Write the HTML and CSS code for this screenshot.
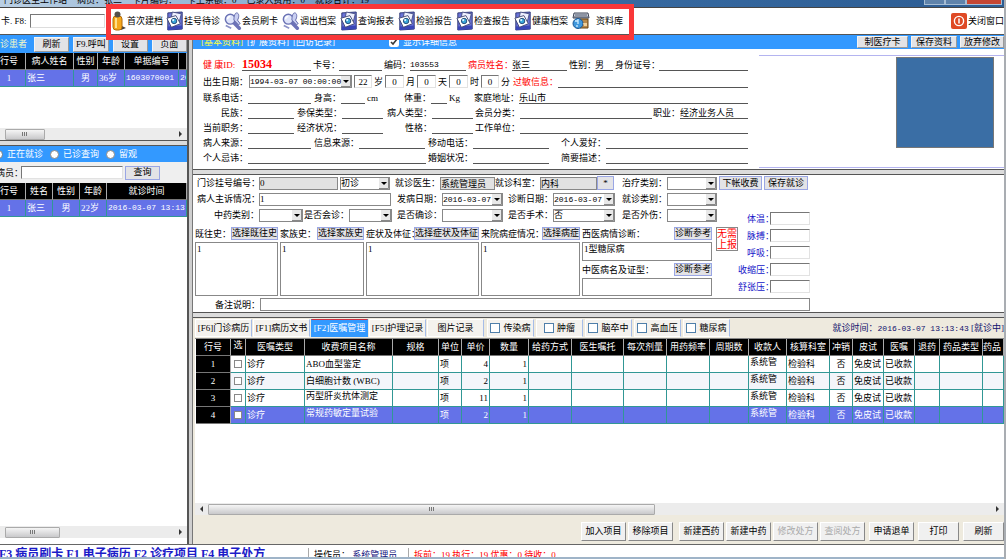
FILE: index.html
```html
<!DOCTYPE html>
<html lang="zh-CN">
<head>
<meta charset="utf-8">
<title>门诊医生工作站</title>
<link rel="stylesheet" href="styles.css">
</head>
<body>
<svg class="sprite" aria-hidden="true">
  <symbol id="i-doc" viewBox="0 0 20 22">
    <path d="M2 2 18 1 18 20 2 21Z" fill="#6b74d8" stroke="#26306f"/>
    <path d="M2 17 18 16 18 20 2 21Z" fill="#3a46b8"/>
    <path d="M7 1 17 3 14 15 5 12Z" fill="#eef0ff" stroke="#444c80"/>
    <path d="M1 8 11 5 16 14 6 18Z" fill="#fff" stroke="#3d4470"/>
    <circle cx="9" cy="11" r="3" fill="#3aa5d8" stroke="#1d4370"/>
    <circle cx="8" cy="10" r="1.2" fill="#dff6ff"/>
  </symbol>
  <symbol id="i-search" viewBox="0 0 20 20">
    <path d="M11 12 17 18" stroke="#6c72b8" stroke-width="4" stroke-linecap="round"/>
    <circle cx="7" cy="8" r="5.5" fill="#dfe4fa" stroke="#6a72b4" stroke-width="1.6"/>
    <path d="M4 8a3 3 0 0 1 3-3" stroke="#fff" stroke-width="1.5" fill="none"/>
    <path d="M14 1c3 0 3 5 1 8l3 4-2 1-5-5c0-4 1-8 3-8Z" fill="#c9cff2" stroke="#5a62a6"/>
    <path d="M2 15 8 18" stroke="#8b91c8" stroke-width="2"/>
  </symbol>
  <symbol id="i-person" viewBox="0 0 15 20">
    <path d="M8 14 14 17 9 19Z" fill="#444"/>
    <rect x="1" y="5" width="9" height="14" rx="3" fill="#f5a81c" stroke="#b36b08"/>
    <rect x="3" y="7" width="2" height="10" fill="#ffe08a"/>
    <circle cx="5.5" cy="3.5" r="3" fill="#55504a"/>
  </symbol>
  <symbol id="i-store" viewBox="0 0 18 18">
    <path d="M2 1h14l1 5H1Z" fill="#cfd3dc" stroke="#3c4456"/>
    <path d="M3 3h12M2 5h14" stroke="#4c566d"/>
    <path d="M8 7h8v9H8Z" fill="#b98a4c" stroke="#684515"/>
    <circle cx="6" cy="11.5" r="5" fill="#3f97dc" stroke="#1c5692"/>
    <path d="M3 9h3v3M6 7v2M5 15v-2" stroke="#cdebff" stroke-width="1.3" fill="none"/>
    <path d="M11 11h4v3h-3Z" fill="#f0cf9a"/>
  </symbol>
  <symbol id="i-power" viewBox="0 0 16 16">
    <rect width="16" height="16" rx="2" fill="#df4a25"/>
    <circle cx="8" cy="8" r="4.6" fill="none" stroke="#fff" stroke-width="1.4"/>
    <path d="M8 5.5v5" stroke="#fff" stroke-width="1.5"/>
  </symbol>
</svg>

<header class="titlebar">
  <div class="titlebar-text"><span>门诊医生工作站</span><span>病员：张三</span><span>卡片编码：</span><span>卡上余额：0</span><span>已录入费用：0</span><span>就诊合计：19</span></div>
  <div class="window-buttons"><button aria-label="最小化"></button><button aria-label="最大化"></button><button class="window-close" aria-label="关闭"></button></div>
</header>

<nav class="toolbar">
  <label class="card-label" for="card">卡. F8:</label>
  <input id="card" class="card-input">
  <div class="tools">
    <button class="tool"><svg class="tool-icon tool-icon-narrow"><use href="#i-person"/></svg>首次建档</button>
    <button class="tool"><svg class="tool-icon"><use href="#i-doc"/></svg>挂号待诊</button>
    <button class="tool"><svg class="tool-icon"><use href="#i-search"/></svg>会员刷卡</button>
    <button class="tool"><svg class="tool-icon"><use href="#i-search"/></svg>调出档案</button>
    <button class="tool"><svg class="tool-icon"><use href="#i-doc"/></svg>查询报表</button>
    <button class="tool"><svg class="tool-icon"><use href="#i-doc"/></svg>检验报告</button>
    <button class="tool"><svg class="tool-icon"><use href="#i-doc"/></svg>检查报告</button>
    <button class="tool"><svg class="tool-icon"><use href="#i-doc"/></svg>健康档案</button>
    <button class="tool tool-wide"><svg class="tool-icon"><use href="#i-store"/></svg>资料库</button>
    <div class="tools-frame"></div>
  </div>
  <button class="tool tool-exit"><svg class="exit-icon"><use href="#i-power"/></svg>关闭窗口</button>
</nav>

<div class="workspace">
  <aside class="sidebar">
    <section class="queue">
      <div class="queue-bar"><span class="queue-title">诊患者</span><button class="btn">刷新</button><button class="btn">F9.呼叫</button><button class="btn">设置</button><button class="btn">页面</button></div>
      <table class="grid list">
        <colgroup><col class="c-no"><col class="c-name"><col class="c-sex"><col class="c-age"><col class="c-bill"><col></colgroup>
        <thead><tr><th class="cut">行号</th><th>病人姓名</th><th>性别</th><th>年龄</th><th>单据编号</th><th></th></tr></thead>
        <tbody><tr class="selected"><td class="mid cut">1</td><td>张三</td><td class="mid">男</td><td>36岁</td><td class="mono">1603070001</td><td class="mono">20</td></tr></tbody>
      </table>
      <div class="fill"></div>
      <div class="scroll scroll-left"><span class="thumb thumb-small"></span><span class="arrow-right"></span></div>
    </section>
    <div class="splitter-h"></div>
    <section class="visits">
      <div class="radio-bar">
        <label><input type="radio" name="state" checked>正在就诊</label>
        <label><input type="radio" name="state">已诊查询</label>
        <label><input type="radio" name="state">留观</label>
      </div>
      <div class="search-bar"><label for="q">病员：</label><input id="q" class="sunken"><button class="btn btn-blue">查询</button></div>
      <table class="grid list">
        <colgroup><col class="c-no"><col class="c-age"><col class="c-age"><col class="c-age"><col></colgroup>
        <thead><tr><th class="cut">行号</th><th>姓名</th><th>性别</th><th>年龄</th><th>就诊时间</th></tr></thead>
        <tbody><tr class="selected"><td class="mid cut">1</td><td>张三</td><td class="mid">男</td><td>22岁</td><td class="mono">2016-03-07 13:13:43</td></tr></tbody>
      </table>
      <div class="fill"></div>
      <div class="scroll scroll-left"><span class="thumb thumb-medium"></span><span class="arrow-right"></span></div>
      <div class="sidebar-foot"></div>
    </section>
  </aside>
  <div class="splitter-v"></div>

  <main class="main">
    <div class="profile-bar">
      <a href="#" class="active">[基本资料]</a><a href="#">[扩展资料]</a><a href="#">[回访记录]</a>
      <label class="detail-check"><input type="checkbox" checked>显示详细信息</label>
      <div class="profile-actions"><button class="btn btn-mid">制医疗卡</button><button class="btn">保存资料</button><button class="btn btn-cut">放弃修改</button></div>
    </div>

    <section class="profile">
      <div class="profile-fields">
        <div class="row row-id">
          <label class="red" for="f1">健 康ID:</label><input id="f1" class="line id-value" value="15034">
          <label for="f2">卡号：</label><input id="f2" class="line">
          <label for="f3">编码：</label><input id="f3" class="line mono" value="103553">
          <label class="red" for="f4">病员姓名：</label><input id="f4" class="line" value="张三">
          <label for="f5">性别：</label><input id="f5" class="line" value="男">
          <label for="f6">身份证号：</label><input id="f6" class="line">
        </div>
        <div class="row row-birth">
          <label for="f7">出生日期：</label><select id="f7" class="select mono"><option>1994-03-07 00:00:00</option></select>
          <input id="a1" class="sunken num" value="22"><label for="a1">岁</label>
          <input id="a2" class="sunken num" value="0"><label for="a2">月</label>
          <input id="a3" class="sunken num" value="0"><label for="a3">天</label>
          <input id="a4" class="sunken num" value="0"><label for="a4">时</label>
          <input id="a5" class="sunken num" value="0"><label for="a5">分</label>
          <label class="red" for="f8">过敏信息：</label><input id="f8" class="line">
        </div>
        <div class="row row-contact">
          <label for="g1">联系电话：</label><input id="g1" class="line">
          <label for="g2">身高：</label><input id="g2" class="line"><span class="unit">cm</span>
          <label for="g3">体重：</label><input id="g3" class="line"><span class="unit">Kg</span>
          <label for="g4">家庭地址：</label><input id="g4" class="line" value="乐山市">
        </div>
        <div class="row row-type">
          <label for="h1">民族：</label><input id="h1" class="line">
          <label for="h2">参保类型：</label><input id="h2" class="line">
          <label for="h3">病人类型：</label><input id="h3" class="line">
          <label for="h4">会员分类：</label><input id="h4" class="line">
          <label for="h5">职业：</label><input id="h5" class="line" value="经济业务人员">
        </div>
        <div class="row row-job">
          <label for="j1">当前职务：</label><input id="j1" class="line">
          <label for="j2">经济状况：</label><input id="j2" class="line">
          <label for="j3">性格：</label><input id="j3" class="line">
          <label for="j4">工作单位：</label><input id="j4" class="line">
        </div>
        <div class="row row-source">
          <label for="k1">病人来源：</label><input id="k1" class="line">
          <label for="k2">信息来源：</label><input id="k2" class="line">
          <label for="k3">移动电话：</label><input id="k3" class="line">
          <label for="k4">个人爱好：</label><input id="k4" class="line">
        </div>
        <div class="row row-taboo">
          <label for="l1">个人忌讳：</label><input id="l1" class="line">
          <label for="l2">婚姻状况：</label><input id="l2" class="line">
          <label for="l3">简要描述：</label><input id="l3" class="line">
        </div>
      </div>
      <div class="profile-photo"><div class="photo"></div></div>
    </section>
    <div class="splitter-h"></div>

    <section class="visit">
      <div class="vrow vrow-reg">
        <label for="m1">门诊挂号编号：</label><input id="m1" class="box gray" value="0">
        <select class="select gap-left" aria-label="初诊"><option>初诊</option></select>
        <label for="m2">就诊医生：</label><input id="m2" class="box gray" value="系统管理员">
        <label for="m3">就诊科室：</label><input id="m3" class="box gray" value="内科">
        <button class="btn btn-blue">*</button>
        <label for="m4">治疗类别：</label><select id="m4" class="select"><option></option></select>
        <button class="btn btn-blue gap-left">下帐收费</button><button class="btn btn-blue gap-left">保存就诊</button>
      </div>
      <div class="visit-body">
        <div class="visit-left">
          <div class="vrow vrow-complaint">
            <label for="n1">病人主诉情况：</label><input id="n1" class="box" value="1">
            <label for="n2">发病日期：</label><select id="n2" class="select mono"><option>2016-03-07</option></select>
            <label for="n3">诊断日期：</label><select id="n3" class="select mono"><option>2016-03-07</option></select>
            <label for="n4">就诊类别：</label><select id="n4" class="select"><option></option></select>
          </div>
          <div class="vrow vrow-flags">
            <label for="o1">中药类别：</label><select id="o1" class="select"><option></option></select>
            <label for="o2">是否会诊：</label><select id="o2" class="select"><option></option></select>
            <label for="o3">是否确诊：</label><select id="o3" class="select"><option></option></select>
            <label for="o4">是否手术：</label><select id="o4" class="select"><option>否</option></select>
            <label for="o5">是否外伤：</label><select id="o5" class="select"><option></option></select>
          </div>
          <div class="notes">
            <div class="note"><div class="note-head"><label for="p1">既往史：</label><button class="btn btn-blue">选择既往史</button></div><textarea id="p1">1</textarea></div>
            <div class="note"><div class="note-head"><label for="p2">家族史：</label><button class="btn btn-blue">选择家族史</button></div><textarea id="p2">1</textarea></div>
            <div class="note"><div class="note-head"><label for="p3">症状及体征：</label><button class="btn btn-blue">选择症状及体征</button></div><textarea id="p3">1</textarea></div>
            <div class="note"><div class="note-head"><label for="p4">来院病症情况：</label><button class="btn btn-blue">选择病症</button></div><textarea id="p4">1</textarea></div>
            <div class="note"><div class="note-head"><label for="p5">西医病情诊断：</label><button class="btn btn-blue">诊断参考</button></div><textarea id="p5">1型糖尿病</textarea><div class="note-head"><label for="p6">中医病名及证型：</label><button class="btn btn-blue">诊断参考</button></div><textarea id="p6"></textarea></div>
            <div class="stamp">无需<br>上报</div>
          </div>
        </div>
        <div class="vitals">
          <label>体温：<input class="sunken"></label>
          <label>脉搏：<input class="sunken"></label>
          <label>呼吸：<input class="sunken"></label>
          <label>收缩压：<input class="sunken"></label>
          <label>舒张压：<input class="sunken"></label>
        </div>
      </div>
      <div class="remark"><label for="r1">备注说明：</label><input id="r1" class="box"></div>
    </section>
    <div class="splitter-h"></div>

    <section class="orders">
      <div class="tabs">
        <button class="tab">[F6]门诊病历</button><button class="tab">[F1]病历文书</button><button class="tab tab-active">[F2]医嘱管理</button><button class="tab">[F5]护理记录</button><button class="tab">图片记录</button>
        <div class="flags">
          <label class="flag"><input type="checkbox">传染病</label><label class="flag"><input type="checkbox">肿瘤</label><label class="flag"><input type="checkbox">脑卒中</label><label class="flag"><input type="checkbox">高血压</label><label class="flag"><input type="checkbox">糖尿病</label>
        </div>
        <span class="visit-time">就诊时间：<span class="mono">2016-03-07 13:13:43</span> [就诊中]</span>
      </div>
      <div class="order-grid">
        <table class="grid order-table">
          <colgroup><col class="w35"><col class="w15"><col class="w59"><col class="w88"><col class="w46"><col class="w23"><col class="w28"><col class="w39"><col class="w43"><col class="w52"><col class="w43"><col class="w43"><col class="w39"><col class="w38"><col class="w43"><col class="w23"><col class="w31"><col class="w31"><col class="w25"><col class="w43"><col></colgroup>
          <thead><tr><th>行号</th><th class="high">选</th><th>医嘱类型</th><th>收费项目名称</th><th>规格</th><th>单位</th><th>单价</th><th>数量</th><th>给药方式</th><th>医生嘱托</th><th>每次剂量</th><th>用药频率</th><th>周期数</th><th>收款人</th><th>核算科室</th><th>冲销</th><th>皮试</th><th>医嘱</th><th>退药</th><th>药品类型</th><th class="start">药品</th></tr></thead>
          <tbody>
            <tr><th>1</th><td><input type="checkbox" aria-label="选择1"></td><td>诊疗</td><td>ABO血型鉴定</td><td></td><td>项</td><td class="right">4</td><td class="right">1</td><td></td><td></td><td></td><td></td><td></td><td class="high">系统管</td><td>检验科</td><td class="mid">否</td><td>免皮试</td><td>已收款</td><td></td><td></td><td></td></tr>
            <tr class="alt"><th>2</th><td><input type="checkbox" aria-label="选择2"></td><td>诊疗</td><td>白细胞计数 (WBC)</td><td></td><td>项</td><td class="right">2</td><td class="right">1</td><td></td><td></td><td></td><td></td><td></td><td class="high">系统管</td><td>检验科</td><td class="mid">否</td><td>免皮试</td><td>已收款</td><td></td><td></td><td></td></tr>
            <tr><th>3</th><td><input type="checkbox" aria-label="选择3"></td><td>诊疗</td><td class="high">丙型肝炎抗体测定</td><td></td><td>项</td><td class="right">11</td><td class="right">1</td><td></td><td></td><td></td><td></td><td></td><td class="high">系统管</td><td>检验科</td><td class="mid">否</td><td>免皮试</td><td>已收款</td><td></td><td></td><td></td></tr>
            <tr class="selected"><th>4</th><td><input type="checkbox" aria-label="选择4"></td><td>诊疗</td><td class="high">常规药敏定量试验</td><td></td><td>项</td><td class="right">2</td><td class="right">1</td><td></td><td></td><td></td><td></td><td></td><td class="high">系统管</td><td>检验科</td><td class="mid">否</td><td>免皮试</td><td>已收款</td><td></td><td></td><td></td></tr>
          </tbody>
        </table>
      </div>
      <div class="scroll"><span class="arrow-left"></span><span class="thumb thumb-large"></span><span class="arrow-right"></span></div>
      <div class="order-actions">
        <button class="act">加入项目</button><button class="act">移除项目</button>
        <button class="act group">新建西药</button><button class="act">新建中药</button><button class="act" disabled>修改处方</button><button class="act" disabled>查阅处方</button>
        <button class="act group-s">申请退单</button><button class="act act-short group-s">打印</button><button class="act act-short group-s">刷新</button>
      </div>
    </section>
  </main>
</div>

<footer class="status">
  <div class="hotkeys">F3 病员刷卡 F1 电子病历 F2 诊疗项目 F4 电子处方</div>
  <div class="status-part">操作员： <span class="navy">系统管理员</span></div>
  <div class="status-part red">拆前：19 执行：19 优惠：0 待收：0</div>
</footer>
</body>
</html>
```
FILE: styles.css
```css
* { box-sizing: border-box; }

body {
  margin: 0;
  height: 100vh;
  display: flex;
  flex-direction: column;
  overflow: hidden;
  border-right: 2px solid #a9adb2;
  background: #fff;
  color: #000;
  font: 9px/12px "Liberation Serif", "Noto Sans CJK SC", serif;
  white-space: nowrap;
}

button, input, select, textarea {
  margin: 0;
  padding: 0;
  border: 0;
  border-radius: 0;
  min-width: 0;
  color: inherit;
  font: inherit;
  line-height: 11px;
}

a { color: inherit; text-decoration: none; }
.sprite { position: absolute; width: 0; height: 0; }
.mono { font-family: "Liberation Mono", "Noto Sans CJK SC", monospace; font-size: 8px; }
.red { color: #f00; }
.navy { color: #10107c; }
.fill { flex: 1; }

/* Title bar */
.titlebar {
  flex: none;
  height: 7px;
  display: flex;
  justify-content: space-between;
  align-items: flex-end;
  overflow: hidden;
  background: linear-gradient(90deg, #b9cfe4, #8fb2d3 25%, #3b6fa6 45%, #2c5c93);
}
.titlebar-text { display: flex; gap: 10px; padding-left: 4px; line-height: 13px; }
.window-buttons { display: flex; align-self: flex-start; margin-right: 2px; }
.window-buttons button { width: 21px; height: 5px; border: 1px solid #a5bcd3; border-top: 0; background: #5f83ab; }
.window-buttons .window-close { width: 36px; background: #c54632; }

/* Toolbar */
.toolbar {
  flex: none;
  height: 28px;
  display: flex;
  align-items: center;
  border-top: 1px solid #444;
  border-bottom: 1px solid #555;
}
.card-label { width: 30px; padding-left: 1px; }
.card-input { width: 75px; height: 14px; border: 1px solid #ddd; border-top-color: #777; border-left-color: #777; }
.tools {
  position: relative;
  display: flex;
  align-items: center;
  padding-left: 6px;
  margin-left: 1px;
  width: 528px;
}
.tools-frame { position: absolute; inset: -7px 0 -9px; border: 5px solid #f93739; pointer-events: none; z-index: 2; }
.tool { display: flex; align-items: center; width: 58px; background: none; }
.tool:first-child { width: 54px; }
.tool-icon { width: 18px; height: 20px; flex: none; }
.tool-icon-narrow { width: 15px; }
.tool-wide { gap: 6px; }
.tool-exit { margin-left: auto; width: 53px; gap: 1px; }
.exit-icon { width: 16px; height: 16px; flex: none; }

/* Shared controls */
.btn {
  flex: none;
  background: #e3e3e6;
  border: 1px solid #f4f4f4;
  border-right-color: #999;
  border-bottom-color: #999;
  color: #000;
  text-align: center;
}
.btn-blue { border-color: #9aa6e4; }
.sunken { height: 13px; border: 1px solid #e2e2e2; border-top-color: #777; border-left-color: #777; background: #fff; }
.box { height: 13px; border: 1px solid #888; background: #fff; }
.gray { background: #e2e2e2; }
.line { height: 12px; border-bottom: 1px solid #555; background: none; }
.num { text-align: center; }
.select {
  appearance: none;
  height: 13px;
  border: 1px solid #888;
  background: #fff url("data:image/svg+xml,%3Csvg xmlns='http://www.w3.org/2000/svg' width='10' height='11'%3E%3Cpath d='M0 0h10v11H0z' fill='%23e8e8e8'/%3E%3Cpath d='M0 10.500h9.500V0' fill='none' stroke='%23888'/%3E%3Cpath d='M2 4h6L5 7z'/%3E%3C/svg%3E") no-repeat right center;
}
.gap-left { margin-left: 2px; }
.splitter-h { flex: none; height: 6px; border-top: 1px solid #555; border-bottom: 1px solid #555; background: #dcdcdc; }
.splitter-v { flex: none; width: 6px; border-left: 2px solid #555; border-right: 1px solid #777; background: #cfcfcf; }

.scroll { flex: none; display: flex; align-items: center; height: 12px; padding: 0 5px; background: #ececec; }
.thumb {
  height: 11px;
  border: 1px solid #aaa;
  border-radius: 1px;
  background:
    repeating-linear-gradient(90deg, #777 0 1px, transparent 1px 2px) center / 6px 4px no-repeat,
    linear-gradient(#f5f5f5, #c9c9cb);
}
.thumb-small { width: 40px; }
.thumb-medium { width: 55px; }
.thumb-large { width: 447px; margin-left: 5px; }
.arrow-right { margin-left: auto; border: 3px solid transparent; border-left-color: #333; border-right: 0; }
.arrow-left { border: 3px solid transparent; border-right-color: #333; border-left: 0; }

/* Data grids */
.grid { width: 100%; table-layout: fixed; border-collapse: separate; border-spacing: 0; }
.grid th, .grid td { height: 17px; padding: 0 1px; overflow: hidden; line-height: 12px; }
.grid th {
  padding: 0;
  background: #000;
  color: #fff;
  font-weight: normal;
  text-align: center;
  border-right: 1px solid #aaa;
  border-bottom: 1px solid #777;
}
.grid td { border-right: 1px solid #319795; border-bottom: 1px solid #319795; }
.grid .selected td { background: #6472e8; color: #fff; }
.grid .alt td { background: #f3f5fa; }
.grid .mid { text-align: center; }
.grid .right { text-align: right; }
.grid .start { text-align: left; }
.grid .high { vertical-align: top; }
.grid .cut { padding-right: 8px; }

/* Left panel */
.workspace { flex: 1; min-height: 0; display: flex; }
.sidebar { flex: none; width: 187px; display: flex; flex-direction: column; overflow: hidden; }
.queue { flex: none; height: 105px; display: flex; flex-direction: column; }
.queue-bar { flex: none; display: flex; align-items: center; gap: 4px; height: 18px; background: #3399ff; }
.queue-bar .btn { flex: 1; height: 15px; }
.queue-title { flex: none; width: 30px; color: #f2f8c8; }
.list { flex: none; }
.c-no { width: 26px; }
.c-name { width: 48px; }
.c-sex { width: 24px; }
.c-age { width: 27px; }
.c-bill { width: 54px; }
.visits { flex: 1; display: flex; flex-direction: column; }
.radio-bar { flex: none; display: flex; align-items: center; gap: 7px; height: 16px; background: #3399ff; color: #fff; }
.radio-bar label { display: flex; align-items: center; gap: 4px; }
.radio-bar label:first-child { margin-left: -6px; }
.radio-bar input { appearance: none; width: 9px; height: 9px; border: 1px solid #888; border-radius: 50%; background: #fff; }
.radio-bar input:checked { background: radial-gradient(#222 0 1px, #fff 2px); }
.search-bar { flex: none; display: flex; align-items: center; height: 21px; background: #efefef; }
.search-bar label { flex: none; width: 25px; margin-left: -4px; }
.search-bar .sunken { width: 102px; }
.search-bar .btn { width: 35px; height: 14px; margin-left: 2px; }
.sidebar-foot { flex: none; height: 6px; }

/* Patient profile */
.main { flex: 1; min-width: 0; display: flex; flex-direction: column; overflow: hidden; }
.profile-bar { flex: none; display: flex; align-items: center; gap: 4px; height: 14px; padding-left: 8px; background: #3399ff; color: #fff; }
.profile-bar .active { color: #ffff3c; }
.detail-check { display: flex; align-items: center; gap: 4px; margin-left: 50px; }
.detail-check input { width: 10px; height: 10px; accent-color: #fff; }
.profile-actions { display: flex; gap: 3px; margin-left: auto; }
.profile-actions .btn { width: 46px; height: 12px; line-height: 10px; }
.profile-actions .btn-mid { width: 51px; }
.profile-actions .btn-cut { width: 44px; }

.profile { flex: none; display: flex; border-bottom: 1px solid #fff; }
.profile-fields { flex: 1; padding: 7px 0 3px 10px; }
.row { display: grid; align-items: center; height: 15px; }
.row label { text-align: right; }
.row-id, .row-birth { height: 17px; column-gap: 2px; }
.row-id label, .row-birth label { text-align: left; }
.row-id { grid-template-columns: 37px 69px 24px 43px 24px 56px 42px 55px 24px 18px 42px 1fr; }
.row-birth { grid-template-columns: 44px 103px 18px 9px 19px 9px 19px 9px 19px 9px 18px 10px 43px 1fr; }
.row-contact { grid-template-columns: 45px 63px 30px 24px 14px 52px 16px 14px 58px 1fr; }
.row-type { grid-template-columns: 45px 46px 48px 41px 49px 41px 47px 132px 28px 1fr; }
.row-job { grid-template-columns: 45px 46px 48px 41px 49px 41px 47px 1fr; }
.row-source { grid-template-columns: 45px 63px 48px 66px 48px 76px 57px 1fr; }
.row-taboo { grid-template-columns: 45px 178px 47px 76px 57px 1fr; }
.id-value { color: #f00; font-size: 12px; font-weight: bold; }
.unit { padding-left: 2px; }
.profile-photo { flex: none; width: 245px; margin: 6px 0 0 11px; border: 1px solid #b4b4f0; border-width: 1px 0; }
.photo { width: 98px; height: 91px; margin: 1px 10px 0 auto; border: 1px solid #777; background: #3a6ea5; }

/* Visit record */
.visit { flex: none; width: 617px; padding: 1px 0 1px 2px; }
.vrow { display: grid; align-items: center; height: 14px; margin-bottom: 2px; padding-left: 2px; }
.vrow label { text-align: right; }
.vrow .btn { height: 14px; }
.vrow-reg { grid-template-columns: 62px 79px 52px 50px 55px 45px 57px 17px 53px 50px 45px 46px; }
.vrow-complaint { grid-template-columns: 62px 132px 51px 61px 50px 62px 52px 50px; }
.vrow-flags { grid-template-columns: 62px 44px 46px 43px 50px 61px 50px 62px 52px 50px; }
.visit-body { display: flex; justify-content: space-between; }
.notes { display: grid; grid-template-columns: 83px 84px 113px 99px 130px 24px; gap: 2px; padding-top: 3px; }
.note { display: flex; flex-direction: column; gap: 2px; height: 69px; }
.note-head { flex: none; display: flex; height: 13px; }
.note-head label { flex: 1; min-width: 0; padding-top: 1px; }
.note-head .btn { height: 13px; z-index: 1; }
.note textarea { flex: 1; min-height: 0; width: 100%; padding: 1px; resize: none; overflow: hidden; border: 1px solid #888; background: #fff; }
.stamp { align-self: start; margin-left: 2px; border: 1px solid #888; color: #f00; font-size: 10px; line-height: 11px; text-align: center; }
.vitals { display: flex; flex-direction: column; justify-content: flex-end; align-items: flex-end; gap: 4px; padding-bottom: 3px; color: #1414c8; }
.vitals label { display: flex; align-items: center; }
.vitals .sunken { width: 40px; margin-left: -4px; }
.remark { display: flex; align-items: center; margin-top: 2px; }
.remark label { width: 65px; padding-left: 20px; }
.remark input { flex: 1; }

/* Orders */
.orders { flex: 1; min-height: 0; display: flex; flex-direction: column; background: #eeeade; }
.tabs { flex: none; display: flex; align-items: center; gap: 1px; height: 20px; padding-left: 2px; }
.tab, .flag { height: 18px; border: 1px solid #fff; border-right-color: #a5bce8; background: #f4f2ee; }
.tab { width: 57px; flex: none; }
.tab-active { background: #3399ff; color: #fff; border-color: #3399ff; border-top-color: #d03040; }
.flags { display: flex; gap: 2px; margin-left: 2px; }
.flag { display: flex; align-items: center; justify-content: center; gap: 3px; width: 47px; }
.flags input, .order-table input { appearance: none; width: 10px; height: 10px; border: 1px solid #4f7faa; background: #fff; }
.visit-time { margin-left: auto; color: #10106c; }
.order-grid { flex: 1; min-height: 0; margin-left: 2px; padding-left: 1px; border-top: 1px solid #888; background: #fff; }
.order-table input { display: block; width: 8px; height: 8px; margin: 0 auto; border-color: #888; }
.orders .scroll { margin-left: 2px; }
.w15 { width: 15px; }
.w23 { width: 23px; }
.w25 { width: 25px; }
.w28 { width: 28px; }
.w31 { width: 31px; }
.w35 { width: 35px; }
.w38 { width: 38px; }
.w39 { width: 39px; }
.w43 { width: 43px; }
.w46 { width: 46px; }
.w52 { width: 52px; }
.w59 { width: 59px; }
.w88 { width: 88px; }
.order-actions { flex: none; display: flex; justify-content: flex-end; align-items: center; gap: 2px; height: 29px; padding-top: 3px; }
.act { width: 45px; height: 19px; border: 1px solid #fff; border-right-color: #888; border-bottom-color: #888; background: #f0f0f0; }
.act-short { width: 41px; }
.act:disabled { color: #aaa; }
.group { margin-left: 4px; }
.group-s { margin-left: 2px; }

/* Status bar */
.status {
  flex: none;
  display: flex;
  height: 15px;
  overflow: hidden;
  border-top: 1px solid #666;
  border-bottom: 2px solid #9fb4c8;
}
.hotkeys { width: 309px; margin-left: -1px; color: #1c1cc8; font-size: 12px; font-weight: bold; line-height: 18px; }
.status-part { width: 100px; margin-top: 3px; padding-left: 5px; border-left: 1px solid #aaa; line-height: 14px; }
```
